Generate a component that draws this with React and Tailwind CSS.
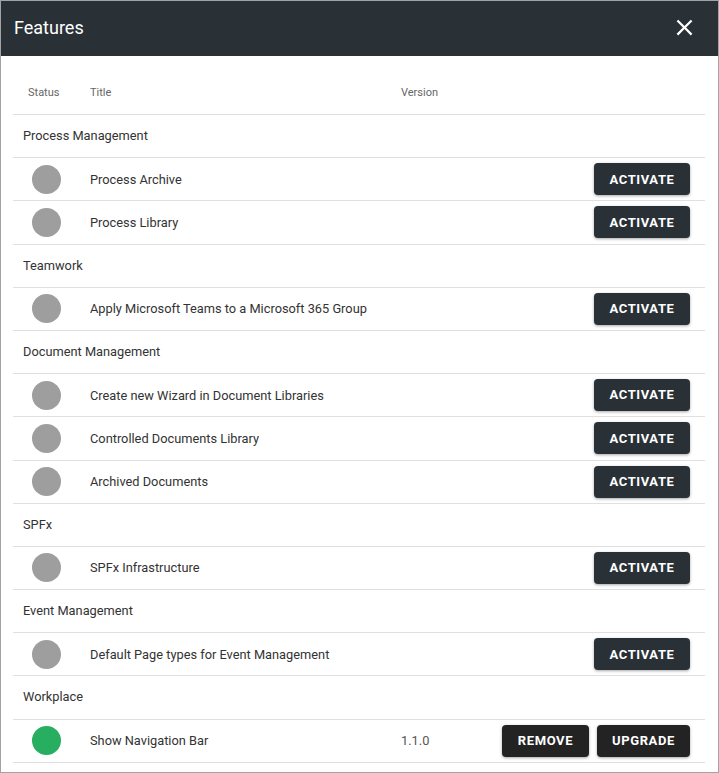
import React from "react";

const groups = [
  { name: "Process Management", items: [{ t: "Process Archive" }, { t: "Process Library" }] },
  { name: "Teamwork", items: [{ t: "Apply Microsoft Teams to a Microsoft 365 Group" }] },
  {
    name: "Document Management",
    items: [
      { t: "Create new Wizard in Document Libraries" },
      { t: "Controlled Documents Library" },
      { t: "Archived Documents" },
    ],
  },
  { name: "SPFx", items: [{ t: "SPFx Infrastructure" }] },
  { name: "Event Management", items: [{ t: "Default Page types for Event Management" }] },
  { name: "Workplace", items: [{ t: "Show Navigation Bar", active: true, v: "1.1.0" }] },
];

function Btn({ children, dark, w }) {
  return (
    <button
      className={
        "h-[32px] rounded-[4px] text-white font-bold text-[13px] tracking-[0.6px] shadow-[0_1px_3px_rgba(0,0,0,0.35)] flex items-center justify-center " +
        (dark ? "bg-[#232323] " : "bg-[#293137] ") +
        w
      }
    >
      {children}
    </button>
  );
}

export default function App() {
  return (
    <div
      className="w-[719px] h-[773px] border border-[#a3a3a3] bg-white flex flex-col overflow-hidden"
      style={{ fontFamily: "Roboto, 'Liberation Sans', sans-serif" }}
    >
      <div className="h-[55px] bg-[#293137] flex items-center justify-between pl-[13px] pr-[20px] pb-[3px] shrink-0">
        <span className="text-white text-[18px]">Features</span>
        <svg width="27" height="27" viewBox="0 0 24 24" fill="white">
          <path d="M19 6.41L17.59 5 12 10.59 6.41 5 5 6.41 10.59 12 5 17.59 6.41 19 12 13.41 17.59 19 19 17.59 13.41 12z" />
        </svg>
      </div>
      <div className="pl-[12px] pr-[13px] pt-[17px]">
        <div className="h-[42px] border-b border-[#e0e0e0] flex items-center pl-[10px] text-[11px] text-[#666]">
          <div className="w-[67px] pl-[5px]">Status</div>
          <div className="w-[311px]">Title</div>
          <div className="flex-1">Version</div>
        </div>
        {groups.map((g) => (
          <React.Fragment key={g.name}>
            <div className="h-[43.2px] border-b border-[#e0e0e0] flex items-center pl-[10px] pb-[1px] text-[12.8px] text-[#333]">
              {g.name}
            </div>
            {g.items.map((it) => (
              <div
                key={it.t}
                className="h-[43.2px] border-b border-[#e0e0e0] flex items-center pl-[10px] pr-[15px] text-[12.8px] text-[#333]"
              >
                <div className="w-[67px] pl-[9px]">
                  <div className={"w-[29px] h-[29px] rounded-full " + (it.active ? "bg-[#27ae60]" : "bg-[#9e9e9e]")} />
                </div>
                <div className="w-[311px]">{it.t}</div>
                <div className="flex-1 text-[#555]">{it.v || ""}</div>
                {it.active ? (
                  <div className="flex gap-[8px]">
                    <Btn dark w="w-[87px]">REMOVE</Btn>
                    <Btn dark w="w-[93px]">UPGRADE</Btn>
                  </div>
                ) : (
                  <Btn w="w-[96px]">ACTIVATE</Btn>
                )}
              </div>
            ))}
          </React.Fragment>
        ))}
      </div>
    </div>
  );
}
